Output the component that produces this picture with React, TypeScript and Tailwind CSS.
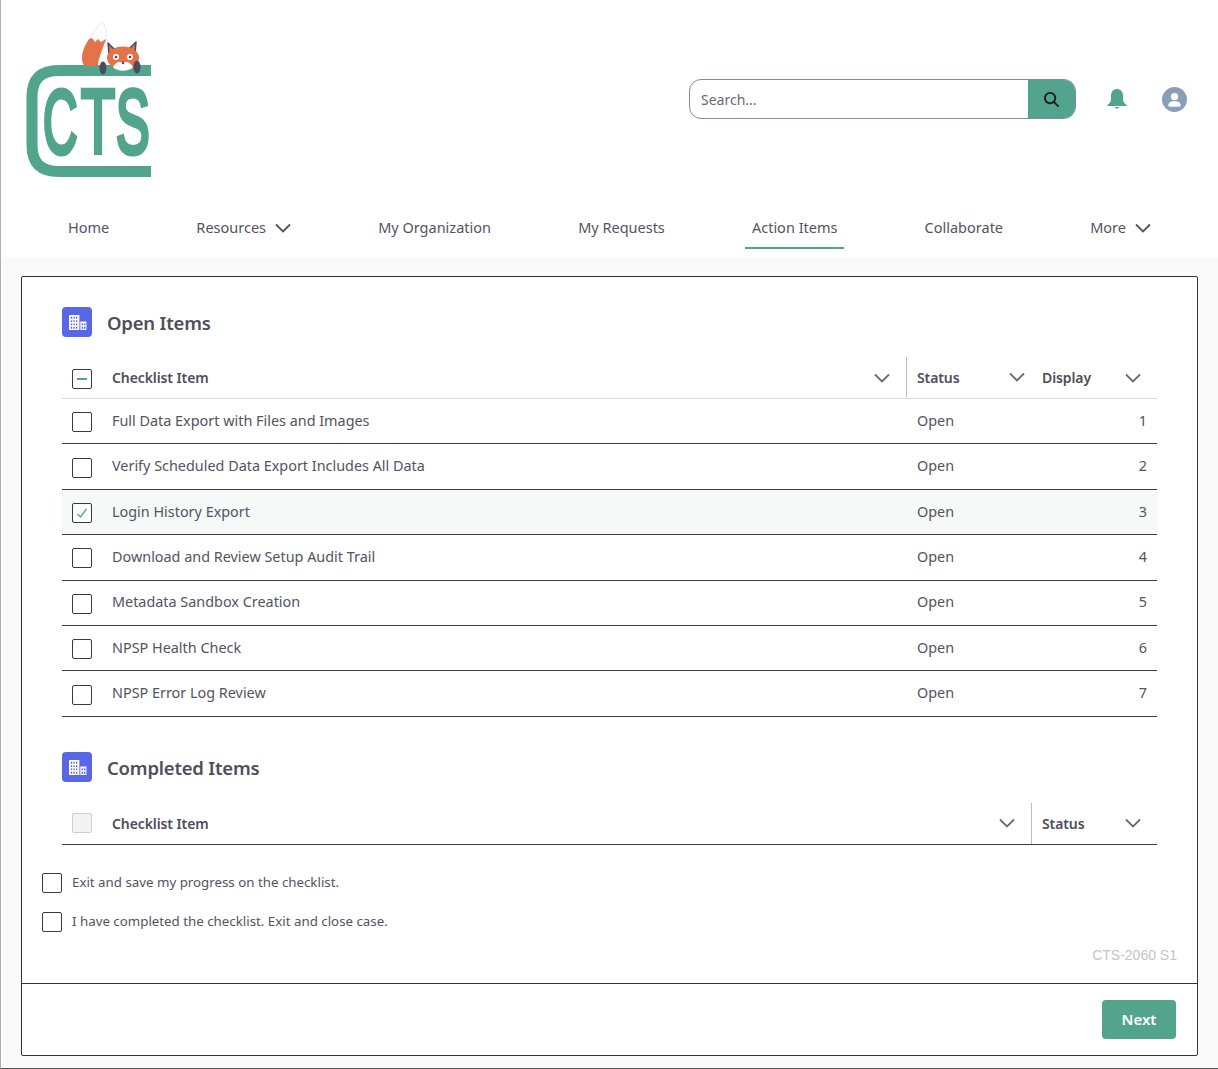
import React from "react";

const F = { fontFamily: '"Noto Sans", sans-serif' };

function Chevron({ className = "" }: { className?: string }) {
  return (
    <svg viewBox="0 0 16 10" className={"w-[16px] h-[10px] " + className} fill="none" stroke="currentColor" strokeWidth="1.8">
      <path d="M1 1.5 L8 8.5 L15 1.5" />
    </svg>
  );
}

function Building() {
  return (
    <div className="w-[30px] h-[30px] rounded-[4px] bg-[#5867e8] flex items-center justify-center shrink-0">
      <svg viewBox="0 0 20 18" className="w-[19px] h-[17px]">
        <path fill="#fff" fillRule="evenodd" d="M1 1h11v16H1z M3 3v2h1.4V3z M5.7 3v2h1.4V3z M8.4 3v2h1.4V3z M3 6.5v2h1.4v-2z M5.7 6.5v2h1.4v-2z M8.4 6.5v2h1.4v-2z M3 10v2h1.4v-2z M5.7 10v2h1.4v-2z M8.4 10v2h1.4v-2z M3 13.5v2h1.4v-2z M5.7 13.5v2h1.4v-2z M8.4 13.5v2h1.4v-2z" />
        <path fill="#fff" fillRule="evenodd" d="M13 8h6.5v9H13z M14.4 10v2h1.6v-2z M16.9 10v2h1.6v-2z M14.4 13.5v2h1.6v-2z M16.9 13.5v2h1.6v-2z" />
      </svg>
    </div>
  );
}

function Box({ state }: { state?: "checked" | "minus" | "disabled" }) {
  const cls =
    state === "disabled"
      ? "border-[#cfcfcf] bg-[#f3f3f3]"
      : "border-[#3a3a3a] bg-white";
  return (
    <span className={"w-[20px] h-[20px] rounded-[2px] border flex items-center justify-center shrink-0 " + cls}>
      {state === "minus" && <span className="w-[10px] h-[2px] bg-[#52a48d]" />}
      {state === "checked" && (
        <svg viewBox="0 0 12 12" className="w-[12px] h-[12px]" fill="none" stroke="#52a48d" strokeWidth="1.3">
          <path d="M1.5 7 L4.5 10 L10.5 2" />
        </svg>
      )}
    </span>
  );
}

function Logo() {
  const letter = { fill: "#52a48d", stroke: "#52a48d", strokeWidth: 4, vectorEffect: "non-scaling-stroke" as const, fontFamily: '"Liberation Sans"', fontSize: 90 };
  return (
    <svg viewBox="0 0 126 160" className="w-[126px] h-[160px] block">
      <path d="M125 51.5 H33 C15 51.5 6 60 6 78 V126 C6 144 15 152.5 33 152.5 H125" fill="none" stroke="#52a48d" strokeWidth="11" />
      <svg x="0" y="0" width="125" height="160" viewBox="0 0 125 160">
        <text transform="translate(17,134) scale(0.53,1)" {...letter}>C</text>
        <text transform="translate(55,134) scale(0.62,1)" {...letter}>T</text>
        <text transform="translate(90,134) scale(0.56,1)" {...letter}>S</text>
      </svg>
      <g transform="translate(0,2)">
        {/* tail */}
        <path d="M76 1 C70 7 64 14 63 24 L79 22 C81 14 81 6 76 1 Z" fill="#fff" stroke="#dfe3ea" strokeWidth="0.8" />
        <path d="M63 18 C58 26 54 34 57 43 C59 46 62 45 72 45 C72 38 76 30 80 18 L75 21 L72 18 L69 21 L66 17 Z" fill="#e4734a" />
        {/* fox head */}
        <path d="M82 22 L83 33 L89 29 Z" fill="#e4734a" stroke="#4a4a5c" strokeWidth="1.5" strokeLinejoin="round" />
        <path d="M110 21 L109 33 L102 29 Z" fill="#e4734a" stroke="#4a4a5c" strokeWidth="1.5" strokeLinejoin="round" />
        <ellipse cx="97" cy="37" rx="16" ry="11.5" fill="#e4734a" />
        <path d="M87 46 C90 41 93 40 97 42 C101 40 104 41 107 46 C103 51 91 51 87 46 Z" fill="#fff" />
        <circle cx="90" cy="36" r="3" fill="#fff" />
        <circle cx="104" cy="36" r="3" fill="#fff" />
        <circle cx="90" cy="36" r="1.3" fill="#4a4a5c" />
        <circle cx="104" cy="36" r="1.3" fill="#4a4a5c" />
        <circle cx="97" cy="42" r="1.2" fill="#4a4a5c" />
        <ellipse cx="77" cy="47" rx="3.5" ry="6.5" fill="#4a4a5c" />
        <ellipse cx="111" cy="46" rx="3.5" ry="6.5" fill="#4a4a5c" />
      </g>
    </svg>
  );
}

const NAV = [
  { t: "Home" },
  { t: "Resources", c: true },
  { t: "My Organization" },
  { t: "My Requests" },
  { t: "Action Items", a: true },
  { t: "Collaborate" },
  { t: "More", c: true },
];

const ITEMS = [
  "Full Data Export with Files and Images",
  "Verify Scheduled Data Export Includes All Data",
  "Login History Export",
  "Download and Review Setup Audit Trail",
  "Metadata Sandbox Creation",
  "NPSP Health Check",
  "NPSP Error Log Review",
];

function Title({ children }: { children: React.ReactNode }) {
  return (
    <div className="flex items-center gap-[15px] h-[30px]">
      <Building />
      <h2 className="text-[18.5px] font-semibold text-[#4f4e5a] tracking-[-0.2px] mt-[2px]">{children}</h2>
    </div>
  );
}

export default function App() {
  return (
    <div style={F} className="relative w-[1218px] h-[1069px] overflow-hidden bg-[#fafafa] border-l border-l-[#b0b0b0] border-b border-b-[#555] text-[14.4px] text-[#54535f]">
      <header className="bg-white h-[257px]">
        <div className="h-[200px] flex items-start">
          <div className="ml-[25px] mt-[19px]">
            <Logo />
          </div>
          <div className="ml-auto mt-[79px] flex items-center">
            <div className="w-[387px] h-[40px] rounded-[12px] border border-[#8088ad] flex overflow-hidden bg-white">
              <div className="flex-1 pl-[11px] flex items-center text-[#6a6a72] text-[14px]">Search...</div>
              <div className="w-[47px] bg-[#52a48d] flex items-center justify-center text-[#1c1c1c]">
                <svg viewBox="0 0 18 18" className="w-[17px] h-[17px]" fill="none" stroke="currentColor" strokeWidth="2">
                  <circle cx="7.5" cy="7.5" r="5.5" />
                  <path d="M11.5 11.5 L16.5 16.5" />
                </svg>
              </div>
            </div>
            <svg viewBox="0 0 22 22" className="w-[22px] h-[22px] ml-[30px]" fill="#52a48d">
              <path d="M11 1 C7 1 5 4 5 8 V11 C5 14 3.5 15.5 1.5 17 V18 H20.5 V17 C18.5 15.5 17 14 17 11 V8 C17 4 15 1 11 1 Z" />
              <path d="M8.5 19 H13.5 L11 21 Z" />
            </svg>
            <svg viewBox="0 0 26 26" className="w-[25px] h-[25px] ml-[34px] mr-[31px]">
              <circle cx="13" cy="13" r="13" fill="#8a9fb6" />
              <circle cx="13" cy="10" r="3.8" fill="#fff" />
              <path d="M6.5 20 C6.5 16 9 14.8 13 14.8 C17 14.8 19.5 16 19.5 20 C17 20.8 9 20.8 6.5 20 Z" fill="#fff" />
            </svg>
          </div>
        </div>
        <nav className="flex items-start pl-[60px] gap-[73.1px] h-[57px] text-[14.5px] text-[#54535f]">
          {NAV.map((n) => (
            <div
              key={n.t}
              className={
                "flex items-center gap-[9px] h-[49px] pt-[8px] px-[7px] border-b-2 " +
                (n.a ? "border-b-[#52a48d]" : "border-b-transparent")
              }
            >
              <span>{n.t}</span>
              {n.c && <Chevron className="text-[#54535f]" />}
            </div>
          ))}
        </nav>
      </header>

      <main className="ml-[20px] mt-[19px] w-[1177px] h-[780px] bg-white border border-[#333] rounded-[2px] flex flex-col">
        <div className="flex-1 pt-[30px] px-[40px] relative">
          <Title>Open Items</Title>
          <div className="mt-[20px] w-[1095px]">
            <div className="flex items-center h-[42px] border-b border-b-[#d9d9d9] font-semibold text-[14px] tracking-[-0.1px] text-[#4f4e5a]">
              <div className="w-[844px] flex items-center pl-[10px] pr-[16px] h-full">
                <span className="mt-[2px]"><Box state="minus" /></span>
                <span className="ml-[20px] flex-1">Checklist Item</span>
                <Chevron className="text-[#6b6b6b]" />
              </div>
              <div className="w-[135px] h-[40px] mb-[1px] flex items-center pl-[10px] pr-[16px] border-l border-l-[#bdbdbd]">
                <span className="flex-1">Status</span>
                <Chevron className="text-[#6b6b6b]" />
              </div>
              <div className="flex-1 flex items-center pl-[1px] pr-[16px]">
                <span className="flex-1">Display</span>
                <Chevron className="text-[#6b6b6b]" />
              </div>
            </div>
            {ITEMS.map((t, i) => (
              <div
                key={t}
                className={"flex items-center h-[45.4px] border-b border-b-[#3a3a3a] " + (i === 2 ? "bg-[#f5f9f8]" : "")}
              >
                <div className="w-[845px] flex items-center pl-[10px]">
                  <span className="mt-[2px]"><Box state={i === 2 ? "checked" : undefined} /></span>
                  <span className="ml-[20px] mb-[1px]">{t}</span>
                </div>
                <div className="pl-[10px] flex-1 mb-[1px]">Open</div>
                <div className="pr-[10px] mb-[1px]">{i + 1}</div>
              </div>
            ))}
          </div>

          <div className="mt-[35.5px]">
            <Title>Completed Items</Title>
          </div>
          <div className="mt-[20px] w-[1095px]">
            <div className="flex items-center h-[43px] border-b border-b-[#3a3a3a] font-semibold text-[14px] tracking-[-0.1px] text-[#4f4e5a]">
              <div className="w-[969px] flex items-center pl-[10px] pr-[16px] h-full">
                <Box state="disabled" />
                <span className="ml-[20px] flex-1">Checklist Item</span>
                <Chevron className="text-[#6b6b6b]" />
              </div>
              <div className="flex-1 h-[41px] flex items-center pl-[10px] pr-[16px] border-l border-l-[#bdbdbd]">
                <span className="flex-1">Status</span>
                <Chevron className="text-[#6b6b6b]" />
              </div>
            </div>
          </div>

          <div className="-ml-[20px] mt-[28px] flex flex-col gap-[19px] text-[13.3px]">
            <div className="flex items-center gap-[10px]">
              <Box />
              <span>Exit and save my progress on the checklist.</span>
            </div>
            <div className="flex items-center gap-[10px]">
              <Box />
              <span>I have completed the checklist. Exit and close case.</span>
            </div>
          </div>
          <div className="absolute right-[20px] bottom-[17px] text-[14px] text-[#c4c4c4]" style={{ fontFamily: '"Liberation Sans", sans-serif' }}>
            CTS-2060 S1
          </div>
        </div>
        <div className="h-[72px] border-t border-t-[#333] flex items-center justify-end pr-[21px]">
          <button className="w-[74px] h-[39px] rounded-[4px] bg-[#52a48d] text-white font-semibold text-[15px]">Next</button>
        </div>
      </main>
    </div>
  );
}
